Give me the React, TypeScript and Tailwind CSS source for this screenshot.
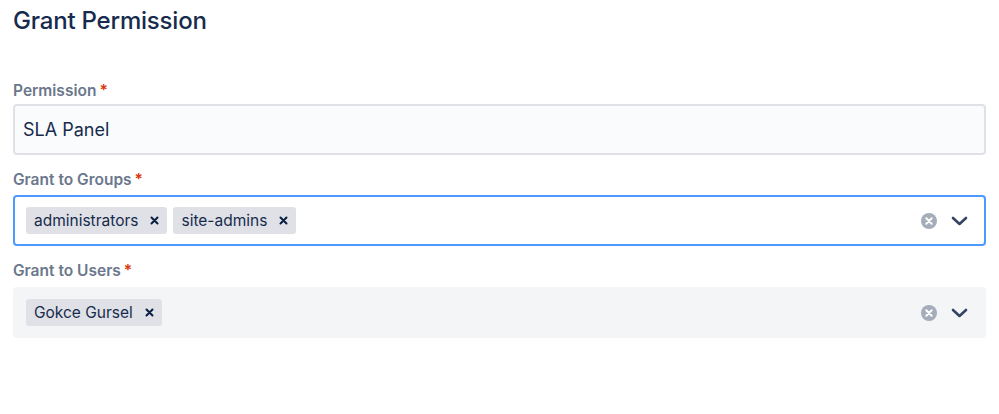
import React from "react";

const font = { fontFamily: "Inter, 'Noto Sans', sans-serif" };

const Label = ({ children }: { children: React.ReactNode }) => (
  <div className="flex items-start gap-[3px] text-[15.5px] font-semibold leading-[18px] text-[#6b778c]">
    <span>{children}</span>
    <span className="text-[#de350b]">*</span>
  </div>
);

const Tag = ({ text }: { text: string }) => (
  <div className="flex h-[27px] items-center rounded-[3px] bg-[#dfe1e6] pl-[8px] pr-[8px] text-[15.5px] text-[#172b4d]">
    <span>{text}</span>
    <svg className="ml-[12px]" width="9" height="9" viewBox="0 0 9 9">
      <path d="M1.5 1.5 L7.5 7.5 M7.5 1.5 L1.5 7.5" stroke="#091e42" strokeWidth="2" strokeLinecap="round" />
    </svg>
  </div>
);

const Indicators = () => (
  <div className="ml-auto flex items-center gap-[14px] pr-[16px]">
    <svg width="16" height="16" viewBox="0 0 16 16">
      <circle cx="8" cy="8" r="8" fill="#a5adba" />
      <path d="M5.3 5.3 L10.7 10.7 M10.7 5.3 L5.3 10.7" stroke="#fff" strokeWidth="2" strokeLinecap="round" />
    </svg>
    <svg width="17" height="10" viewBox="0 0 17 10">
      <path d="M2 2 L8.5 8 L15 2" stroke="#344563" strokeWidth="2.6" fill="none" strokeLinecap="round" strokeLinejoin="round" />
    </svg>
  </div>
);

export default function App() {
  return (
    <div className="h-[414px] w-[999px] bg-white px-[13px] text-[#172b4d]" style={font}>
      <h1 className="pt-[6px] text-[24px] font-medium leading-[30px] tracking-[-0.2px] text-[#172b4d]">
        Grant Permission
      </h1>

      <div className="mt-[46px] w-[973px]">
        <Label>Permission</Label>
        <div className="mt-[4px] flex h-[51px] items-center rounded-[4px] border-2 border-[#dfe1e6] bg-[#fafbfc] px-[8px] text-[18px]">
          SLA Panel
        </div>

        <div className="mt-[16px]">
          <Label>Grant to Groups</Label>
        </div>
        <div className="mt-[6px] flex h-[51px] items-center gap-[6px] rounded-[4px] border-2 border-[#4c9aff] bg-white pl-[11px]">
          <Tag text="administrators" />
          <Tag text="site-admins" />
          <Indicators />
        </div>

        <div className="mt-[16px]">
          <Label>Grant to Users</Label>
        </div>
        <div className="mt-[7px] flex h-[51px] items-center gap-[6px] rounded-[4px] border-2 border-transparent bg-[#f4f5f7] pl-[11px]">
          <Tag text="Gokce Gursel" />
          <Indicators />
        </div>
      </div>
    </div>
  );
}
